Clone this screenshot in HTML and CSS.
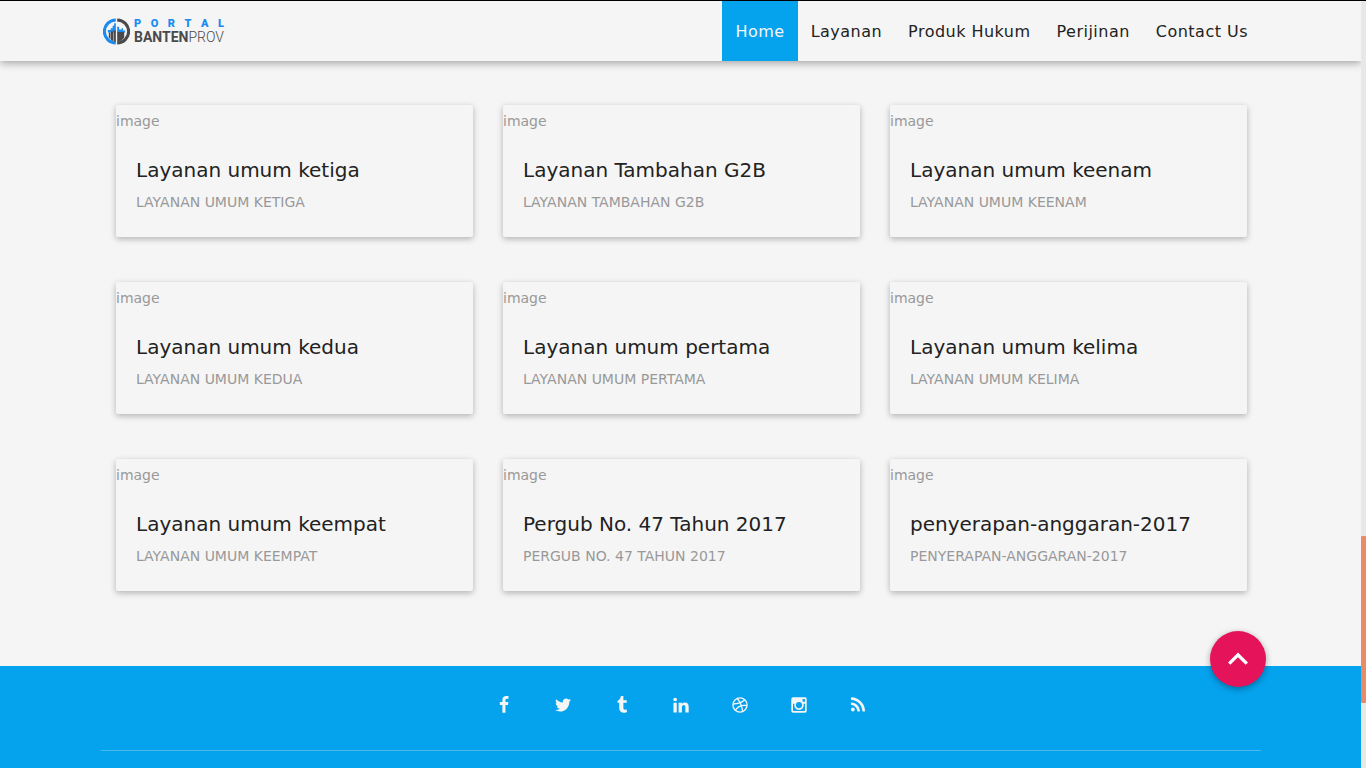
FILE: index.html
```html
<!DOCTYPE html>
<html lang="id">
<head>
<meta charset="utf-8">
<meta name="viewport" content="width=device-width, initial-scale=1">
<title>Portal Bantenprov</title>
<link rel="stylesheet" href="styles.css">
</head>
<body>
<div class="page">
  <header class="header">
    <div class="container header-inner">
      <a class="logo" href="#">
        <svg class="logo-mark" viewBox="0 0 28 28" aria-hidden="true">
          <path d="M13.300 .500A13.500 13.500 0 0 0 13.300 27.500V24.300A10.300 10.300 0 0 1 13.300 3.700z" fill="#1a8cf0"/>
          <path d="M14.700 .500A13.500 13.500 0 0 1 14.700 27.500V24.300A10.300 10.300 0 0 0 14.700 3.700z" fill="#4a4a4c"/>
          <path d="M5 12.500h3v-2h2V8h1.500V5.500h1.800V15H5z" fill="#1a8cf0"/>
          <path d="M6 15h1.800v7L6 20.500zM8.300 14h2.400v10l-2.400-1.300zM11.200 13h2.100v12l-2.100-.7z" fill="#4a4a4c"/>
          <path d="M14.700 9h2v3h2.600v-1.500h1.500V13H23v2h-8.300z" fill="#1a8cf0"/>
          <path d="M14.700 14.500h7.300v6l-3.300 3-4 1.500z" fill="#4a4a4c"/>
        </svg>
        <span class="logo-text">
          <span class="logo-top"><span>P</span><span>O</span><span>R</span><span>T</span><span>A</span><span>L</span></span>
          <span class="logo-bottom"><b>BANTEN</b>PROV</span>
        </span>
      </a>
      <nav class="nav">
        <a class="nav-link active" href="#">Home</a>
        <a class="nav-link" href="#">Layanan</a>
        <a class="nav-link" href="#">Produk Hukum</a>
        <a class="nav-link" href="#">Perijinan</a>
        <a class="nav-link" href="#">Contact Us</a>
      </nav>
    </div>
  </header>
  <main class="container cards">
    <article class="card"><div class="card-image">image</div><div class="card-body"><h2>Layanan umum ketiga</h2><p>Layanan umum ketiga</p></div></article>
    <article class="card"><div class="card-image">image</div><div class="card-body"><h2>Layanan Tambahan G2B</h2><p>Layanan Tambahan G2B</p></div></article>
    <article class="card"><div class="card-image">image</div><div class="card-body"><h2>Layanan umum keenam</h2><p>Layanan umum keenam</p></div></article>
    <article class="card"><div class="card-image">image</div><div class="card-body"><h2>Layanan umum kedua</h2><p>Layanan umum kedua</p></div></article>
    <article class="card"><div class="card-image">image</div><div class="card-body"><h2>Layanan umum pertama</h2><p>Layanan umum pertama</p></div></article>
    <article class="card"><div class="card-image">image</div><div class="card-body"><h2>Layanan umum kelima</h2><p>Layanan umum kelima</p></div></article>
    <article class="card"><div class="card-image">image</div><div class="card-body"><h2>Layanan umum keempat</h2><p>Layanan umum keempat</p></div></article>
    <article class="card"><div class="card-image">image</div><div class="card-body"><h2>Pergub No. 47 Tahun 2017</h2><p>Pergub No. 47 Tahun 2017</p></div></article>
    <article class="card"><div class="card-image">image</div><div class="card-body"><h2>penyerapan-anggaran-2017</h2><p>penyerapan-anggaran-2017</p></div></article>
  </main>
  <footer class="footer">
    <div class="container footer-inner">
      <div class="social">
        <a href="#" aria-label="Facebook"><svg viewBox="0 0 1792 1792"><path d="M1343 12v264h-157q-86 0-116 36t-30 108v189h293l-39 296h-254v759h-306v-759h-255v-296h255v-218q0-186 104-288.500t277-102.500q147 0 228 12z"/></svg></a>
        <a href="#" aria-label="Twitter"><svg viewBox="0 0 1792 1792"><path d="M1684 408q-67 98-162 167 1 14 1 42 0 130-38 259.500t-115.500 248.500-184.500 210.500-258 146-323 54.500q-271 0-496-145 35 4 78 4 225 0 401-138-105-2-188-64.500t-114-159.500q33 5 61 5 43 0 85-11-112-23-185.500-111.500t-73.500-205.500v-4q68 38 146 41-66-44-105-115t-39-154q0-88 44-163 121 149 294.500 238.500t371.500 99.500q-8-38-8-74 0-134 94.500-228.500t228.500-94.500q140 0 236 102 109-21 205-78-37 115-142 178 93-10 186-50z"/></svg></a>
        <a href="#" aria-label="Tumblr"><svg viewBox="0 0 1792 1792"><path d="M1328 1329l80 237q-23 35-111 66t-177 32q-104 2-190.500-26t-142.500-74-95-106-55.500-120-16.500-118v-544h-168v-215q72-26 129-69.500t91-90 58-102 34-99 15-88.500q1-5 4.500-8.500t7.500-3.500h244v424h333v252h-334v518q0 30 6.500 56t22.500 52.500 49.500 41.500 81.500 14q78-2 134-29z"/></svg></a>
        <a href="#" aria-label="LinkedIn"><svg viewBox="-110 0 1792 1792"><path d="M365 663v991h-330v-991h330zm21-306q1 73-50.500 122t-135.500 49h-2q-82 0-132-49t-50-122q0-74 51.500-122.500t134.500-48.500 133 48.500 51 122.500zm1166 729v568h-329v-530q0-105-40.500-164.500t-126.500-59.500q-63 0-105.500 34.500t-63.500 85.500q-11 30-11 81v553h-329q2-399 2-647t-1-296l-1-48h329v144h-2q20-32 41-56t56.500-52 87-43.500 114.500-15.500q171 0 275 113.500t104 332.500z"/></svg></a>
        <a href="#" aria-label="Dribbble"><svg viewBox="0 0 18 18"><g fill="none" stroke="currentColor" stroke-width="1.300"><circle cx="9" cy="9" r="7.100"/><path d="M6.300 2.500Q10.500 7.500 11.700 15.500M2 8Q9.500 8 13.700 3.800M4.300 14.300Q8 8.300 16 9.500"/></g></svg></a>
        <a href="#" aria-label="Instagram"><svg viewBox="0 0 18 18"><path fill-rule="evenodd" d="M3 1.300h12a1.700 1.700 0 0 1 1.700 1.700v12a1.700 1.700 0 0 1-1.700 1.700H3A1.700 1.700 0 0 1 1.300 15V3A1.700 1.700 0 0 1 3 1.300zM3 7.800V14.300q0 .7.700.7h10.600q.7 0 .7-.7V7.800h-1.400a4.800 4.800 0 1 1-9.200 0zM12.600 3v2.200q0 .5.500.5h1.400q.5 0 .5-.5V3.500q0-.5-.5-.5zM9 6a3.100 3.100 0 1 0 0 6.200A3.100 3.100 0 0 0 9 6z"/></svg></a>
        <a href="#" aria-label="RSS"><svg viewBox="0 0 1792 1792"><path d="M576 1344q0 80-56 136t-136 56-136-56-56-136 56-136 136-56 136 56 56 136zm512 123q2 28-17 48-18 21-47 21h-135q-25 0-43-16.500t-20-41.500q-22-229-184.500-391.500t-391.500-184.500q-25-2-41.500-20t-16.500-43v-135q0-29 21-47 17-17 43-17h5q160 13 306 80.500t259 181.500q114 113 181.500 259t80.500 306zm512 2q2 27-18 47-18 20-46 20h-143q-26 0-44.500-17.500t-19.500-42.500q-12-215-101-408.500t-231.500-336-336-231.500-408.500-102q-25-1-42.500-19.500t-17.500-43.500v-143q0-28 20-46 18-18 44-18h3q262 13 501.500 120t425.500 294q187 186 294 425.500t120 501.500z"/></svg></a>
      </div>
    </div>
  </footer>
</div>
<button class="to-top" type="button" aria-label="Back to top">
  <svg viewBox="0 0 24 24"><path d="M12 5.500l-10 10 2.350 2.350L12 10.200l7.650 7.650L22 15.500z"/></svg>
</button>
<div class="rail"><div class="rail-thumb"></div></div>
</body>
</html>
```
FILE: styles.css
```css
* { box-sizing: border-box; }
body {
  margin: 0;
  background: #f5f5f5;
  color: #222;
  font: 14px/21px "DejaVu Sans", sans-serif;
}
a { color: inherit; text-decoration: none; }
.page {
  min-height: 100vh;
  margin-right: 5px;
  display: flex;
  flex-direction: column;
}
.container {
  width: 100%;
  max-width: 1161px;
  margin: 0 auto;
}
.header {
  border-top: 1px solid #000;
  box-shadow: 0 2px 8px rgba(0, 0, 0, .35);
}
.header-inner {
  display: flex;
  justify-content: space-between;
  align-items: center;
}
.logo {
  display: flex;
  align-items: center;
  gap: 4px;
  padding-left: 3px;
}
.logo-mark { width: 27px; height: 27px; }
.logo-text {
  display: flex;
  flex-direction: column;
  font-family: Roboto, sans-serif;
}
.logo-top {
  display: flex;
  justify-content: space-between;
  color: #1a8cf0;
  font-size: 11px;
  font-weight: 900;
  line-height: 13px;
}
.logo-bottom {
  color: #4a4a4c;
  font-size: 14px;
  font-weight: 300;
  line-height: 15px;
}
.logo-bottom b { font-weight: 700; }
.nav { display: flex; }
.nav-link {
  padding: 2px 13px 0;
  font-size: 16px;
  line-height: 58px;
  letter-spacing: .03em;
}
.nav-link.active { background: #05a2ed; color: #f5f5f5; }
.cards {
  display: grid;
  grid-template-columns: repeat(3, 1fr);
  gap: 45px 30px;
  padding: 44px 14px 75px 16px;
}
.card {
  border-radius: 2px;
  box-shadow: 0 2px 6px rgba(0, 0, 0, .28);
}
.card-image { padding-top: 6px; color: #999; }
.card-body { padding: 20px; }
.card h2 {
  margin: 0;
  font-size: 20px;
  font-weight: 400;
  line-height: 36px;
}
.card p {
  margin: 0;
  padding: 4px 0;
  color: #999;
  text-transform: uppercase;
}
.footer {
  flex: 1;
  background: #05a2ed;
  color: #f5f5f5;
}
.footer-inner { padding: 0 0 17px 1px; }
.social {
  display: flex;
  justify-content: center;
  gap: 41px;
  padding: 30px 0 36px;
  border-bottom: 1px solid #4bb9ee;
}
.social svg {
  display: block;
  width: 18px;
  height: 18px;
  fill: currentColor;
}
.to-top {
  position: fixed;
  right: 100px;
  bottom: 81px;
  width: 56px;
  height: 56px;
  display: grid;
  place-items: center;
  padding: 0;
  border: 0;
  border-radius: 50%;
  background: #e51359;
  color: #fff;
  box-shadow: 0 2px 6px rgba(0, 0, 0, .35);
}
.to-top svg { width: 24px; height: 24px; fill: currentColor; }
.rail {
  position: fixed;
  inset: 0 0 0 auto;
  width: 5px;
  border-top: 1px solid #000;
  background: #e8e8e8;
}
.rail-thumb {
  height: 167px;
  margin-top: 535px;
  border-radius: 1px;
  background: #eb8a66;
}
```
